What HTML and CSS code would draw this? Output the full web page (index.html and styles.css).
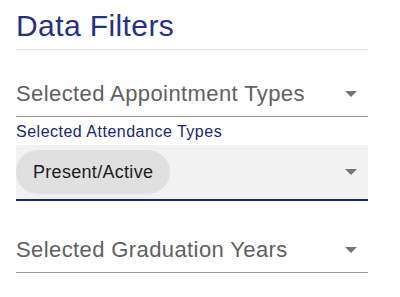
FILE: index.html
```html
<!DOCTYPE html>
<html lang="en">
<head>
<meta charset="utf-8">
<title>Data Filters</title>
<link rel="stylesheet" href="styles.css">
</head>
<body>
<div class="panel">
  <h1 class="title">Data Filters</h1>
  <div class="divider"></div>

  <div class="field field-first">
    <span class="placeholder">Selected Appointment Types</span>
    <svg class="caret" width="12" height="6" viewBox="0 0 12 6"><polygon points="0,0 12,0 6,6" fill="#757575"/></svg>
  </div>

  <div class="label">Selected Attendance Types</div>
  <div class="field-filled">
    <span class="chip">Present/Active</span>
    <svg class="caret" width="12" height="6" viewBox="0 0 12 6"><polygon points="0,0 12,0 6,6" fill="#757575"/></svg>
  </div>

  <div class="field field-last">
    <span class="placeholder">Selected Graduation Years</span>
    <svg class="caret" width="12" height="6" viewBox="0 0 12 6"><polygon points="0,0 12,0 6,6" fill="#757575"/></svg>
  </div>
</div>
</body>
</html>
```

FILE: styles.css
```css
html, body {
  margin: 0;
  padding: 0;
  background: #ffffff;
}

body {
  font-family: "Liberation Sans", Arial, sans-serif;
}

.panel {
  width: 352px;
  padding: 8px 32px 0 16px;
}

.title {
  margin: 0;
  font-size: 30px;
  line-height: 36px;
  font-weight: 400;
  color: #25308a;
  letter-spacing: 0.4px;
}

.divider {
  margin-top: 5px;
  height: 1px;
  background: #dcdcdc;
}

.field {
  display: flex;
  align-items: center;
  justify-content: space-between;
  padding-bottom: 9px;
  border-bottom: 1px solid #9a9a9a;
}

.field-first {
  padding-top: 31px;
}

.field-last {
  padding-top: 36px;
}

.placeholder {
  font-size: 22px;
  line-height: 26px;
  color: #616161;
  letter-spacing: 0.4px;
}

.caret {
  display: block;
  margin-right: 11px;
}

.label {
  margin-top: 6px;
  margin-bottom: 4px;
  font-size: 16px;
  line-height: 18px;
  color: #1a237e;
  letter-spacing: 0.5px;
}

.field-filled {
  display: flex;
  align-items: center;
  justify-content: space-between;
  padding: 5px 0;
  background: #f2f2f2;
  border-bottom: 2px solid #1a237e;
}

.chip {
  display: inline-flex;
  align-items: center;
  height: 44px;
  padding: 0 17px;
  border-radius: 22px;
  background: #e0e0e0;
  font-size: 18px;
  color: #1c1c1c;
  letter-spacing: 0.3px;
}
```
